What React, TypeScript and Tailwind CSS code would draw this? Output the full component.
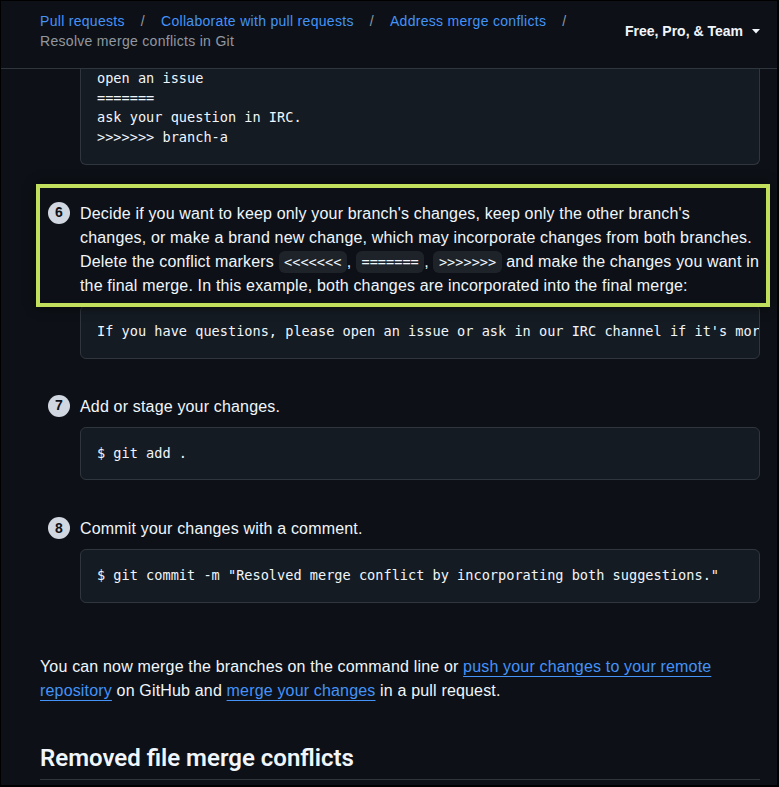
import React from 'react';

const mono = "font-['DejaVu_Sans_Mono','Liberation_Mono',monospace]";

function CodeBlock({ children, className = '' }: { children: React.ReactNode; className?: string }) {
  return (
    <pre
      className={`ml-10 overflow-hidden whitespace-pre rounded-md border border-[#30363d] bg-[#151b23] p-4 text-[13.6px] leading-[1.45] text-[#f0f6fc] ${mono} ${className}`}
    >
      {children}
    </pre>
  );
}

function Step({ n, children }: { n: number; children: React.ReactNode }) {
  return (
    <div className="flex gap-[10px] pl-2">
      <span className="flex h-[22px] w-[22px] shrink-0 items-center justify-center rounded-full bg-[#d1d7e0] text-[14px] font-semibold text-[#0d1117]">
        {n}
      </span>
      <div className="text-base leading-6 tracking-[0.17px] text-[#f0f6fc]">{children}</div>
    </div>
  );
}

function Code({ children }: { children: React.ReactNode }) {
  return (
    <code
      className={`rounded-md bg-[#656c7633] px-[0.4em] py-[0.2em] text-[85%] leading-none tracking-normal ${mono}`}
    >
      {children}
    </code>
  );
}

function Link({ children }: { children: React.ReactNode }) {
  return (
    <a className="text-[#4493f8] underline decoration-1 underline-offset-4">{children}</a>
  );
}

export default function App() {
  return (
    <div className="flex h-[787px] w-[779px] flex-col overflow-hidden border-t border-r-2 border-b-2 border-l border-black bg-[#0d1117] font-['Liberation_Sans',Arial,sans-serif]">
      <header className="flex h-[68px] shrink-0 items-center justify-between border-b border-[#30363d] pb-2 pl-[39px] pr-[17px]">
        <nav className="text-sm leading-5 tracking-[0.3px]">
          <div className="flex items-center">
            <a className="text-[#4493f8]">Pull requests</a>
            <span className="px-4 text-[#9198a1]">/</span>
            <a className="text-[#4493f8]">Collaborate with pull requests</a>
            <span className="px-4 text-[#9198a1]">/</span>
            <a className="text-[#4493f8]">Address merge conflicts</a>
            <span className="px-4 text-[#9198a1]">/</span>
          </div>
          <div className="text-[#9198a1]">Resolve merge conflicts in Git</div>
        </nav>
        <button className="flex items-center gap-[9px] text-sm font-semibold text-[#f0f6fc]">
          Free, Pro, &amp; Team
          <svg width="8" height="5" viewBox="0 0 8 5" className="mt-px">
            <path d="M0 0h8L4 4.5z" fill="#f0f6fc" />
          </svg>
        </button>
      </header>

      <main className="flex-1 overflow-hidden pl-[39px] pr-[17px]">
        <CodeBlock className="rounded-t-none border-t-0 pt-0">
          {'open an issue\n=======\nask your question in IRC.\n>>>>>>> branch-a'}
        </CodeBlock>

        <div className="relative z-10 mt-[19px] -ml-1 -mr-[10px] border-4 border-[#c2de5d] bg-[#0d1117] pt-[14px] pb-[5px] shadow-[0_0_10px_rgba(0,0,0,0.7)]">
          <Step n={6}>
            Decide if you want to keep only your branch's changes, keep only the other branch's
            <br />
            changes, or make a brand new change, which may incorporate changes from both branches.
            <br />
            Delete the conflict markers <Code>&lt;&lt;&lt;&lt;&lt;&lt;&lt;</Code>, <Code>=======</Code>,{' '}
            <Code>&gt;&gt;&gt;&gt;&gt;&gt;&gt;</Code> and make the changes you want in
            <br />
            the final merge. In this example, both changes are incorporated into the final merge:
          </Step>
        </div>
        <CodeBlock className="-mt-[2px]">
          {"If you have questions, please open an issue or ask in our IRC channel if it's more urgent."}
        </CodeBlock>

        <div className="mt-[36px]">
          <Step n={7}>Add or stage your changes.</Step>
          <CodeBlock className="mt-2">{'$ git add .'}</CodeBlock>
        </div>

        <div className="mt-[37px]">
          <Step n={8}>Commit your changes with a comment.</Step>
          <CodeBlock className="mt-2">
            {'$ git commit -m "Resolved merge conflict by incorporating both suggestions."'}
          </CodeBlock>
        </div>

        <p className="mt-[52px] text-base leading-6 tracking-[0.17px] text-[#f0f6fc]">
          You can now merge the branches on the command line or{' '}
          <Link>push your changes to your remote</Link>
          <br />
          <Link>repository</Link> on GitHub and <Link>merge your changes</Link> in a pull request.
        </p>

        <h2 className="mt-[40px] border-b border-[#3d444db3] pb-[6px] font-['Roboto',sans-serif] text-2xl leading-[1.25] font-semibold text-[#f0f6fc]">
          Removed file merge conflicts
        </h2>
      </main>
    </div>
  );
}
